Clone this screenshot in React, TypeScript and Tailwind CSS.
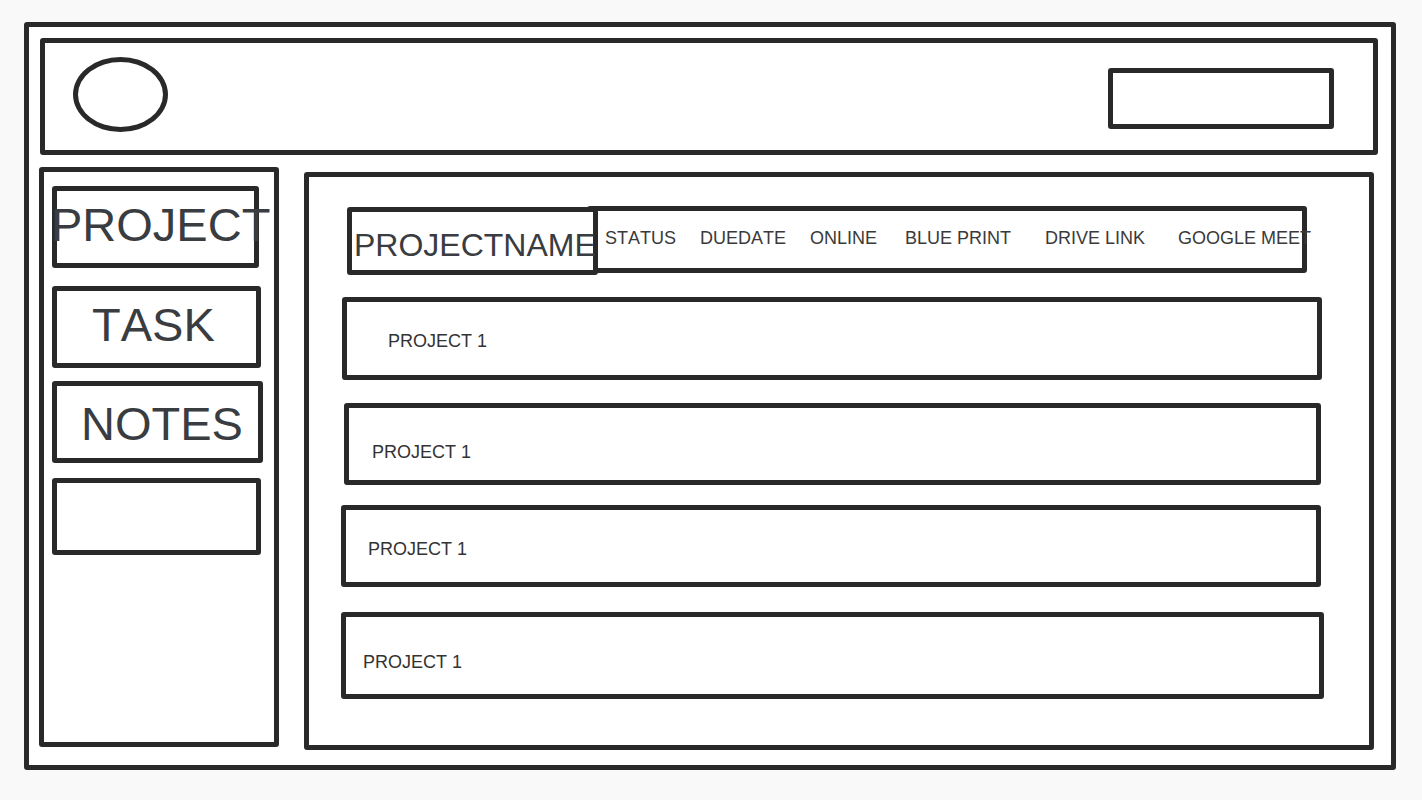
import React from "react";

const B = "border-[5px] border-[#292929] rounded-[3px] bg-white";

export default function App() {
  const cols: { label: string; w: string }[] = [
    { label: "STATUS", w: "w-[95px]" },
    { label: "DUEDATE", w: "w-[110px]" },
    { label: "ONLINE", w: "w-[95px]" },
    { label: "BLUE PRINT", w: "w-[140px]" },
    { label: "DRIVE LINK", w: "w-[133px]" },
    { label: "GOOGLE MEET", w: "w-[140px]" },
  ];

  return (
    <div
      className="w-[1422px] h-[800px] bg-[#f9f9f9] pl-[24px] pt-[22px] overflow-hidden [font-kerning:none]"
      style={{ fontFamily: '"Liberation Sans", Arial, sans-serif' }}
    >
      {/* outer frame */}
      <div className={`${B} w-[1372px] h-[748px] pl-[10px] pt-[11px] flex flex-col`}>
        {/* header */}
        <div className={`${B} ml-[1px] w-[1338px] h-[117px] flex items-start`}>
          <div className="ml-[28px] mt-[14px] w-[95px] h-[75px] rounded-[50%] border-[5px] border-[#292929]" />
          <div className="ml-auto mr-[39px] mt-[25px] w-[226px] h-[61px] border-[5px] border-[#292929] rounded-[3px]" />
        </div>

        {/* body */}
        <div className="flex items-start mt-[12px]">
          {/* sidebar */}
          <div className={`${B} w-[240px] h-[580px] flex flex-col pl-[8px] pt-[14px]`}>
            <div className={`${B} w-[207px] h-[82px] text-[47px] leading-none text-[#393c40] whitespace-nowrap pt-[10px] pl-0`}>
              <span className="block ml-[-6px]">PROJECT</span>
            </div>
            <div className={`${B} w-[209px] h-[82px] mt-[18px] text-[47px] leading-none text-[#393c40] whitespace-nowrap pt-[10px] pl-[35px]`}>
              TASK
            </div>
            <div className={`${B} w-[211px] h-[82px] mt-[13px] text-[47px] leading-none text-[#393c40] whitespace-nowrap pt-[14px] pl-[24px]`}>
              NOTES
            </div>
            <div className={`${B} w-[209px] h-[77px] mt-[15px]`} />
          </div>

          {/* main */}
          <div className={`${B} ml-[25px] mt-[5px] w-[1070px] h-[578px] flex flex-col`}>
            {/* header row */}
            <div className="flex items-start ml-[38px] mt-[30px]">
              <div className={`${B} w-[251px] h-[68px] text-[32px] leading-none text-[#393c40] whitespace-nowrap pt-[17px] pl-[2px] relative z-10 bg-transparent`}>
                PROJECTNAME
              </div>
              <div className={`${B} ml-[-11px] mt-[-1px] w-[720px] h-[67px] flex items-start pt-[18px] pl-[13px] text-[18px] leading-none text-[#3a3a3a] whitespace-nowrap`}>
                {cols.map((c) => (
                  <div key={c.label} className={`${c.w} shrink-0`}>
                    {c.label}
                  </div>
                ))}
              </div>
            </div>

            {/* rows */}
            <div className={`${B} ml-[33px] mt-[22px] w-[980px] h-[83px] text-[18px] leading-none text-[#333] pl-[41px] pt-[30px]`}>
              PROJECT 1
            </div>
            <div className={`${B} ml-[35px] mt-[23px] w-[977px] h-[82px] text-[18px] leading-none text-[#333] pl-[23px] pt-[35px]`}>
              PROJECT 1
            </div>
            <div className={`${B} ml-[32px] mt-[20px] w-[980px] h-[82px] text-[18px] leading-none text-[#333] pl-[22px] pt-[30px]`}>
              PROJECT 1
            </div>
            <div className={`${B} ml-[32px] mt-[25px] w-[983px] h-[87px] text-[18px] leading-none text-[#333] pl-[17px] pt-[36px]`}>
              PROJECT 1
            </div>
          </div>
        </div>
      </div>
    </div>
  );
}
